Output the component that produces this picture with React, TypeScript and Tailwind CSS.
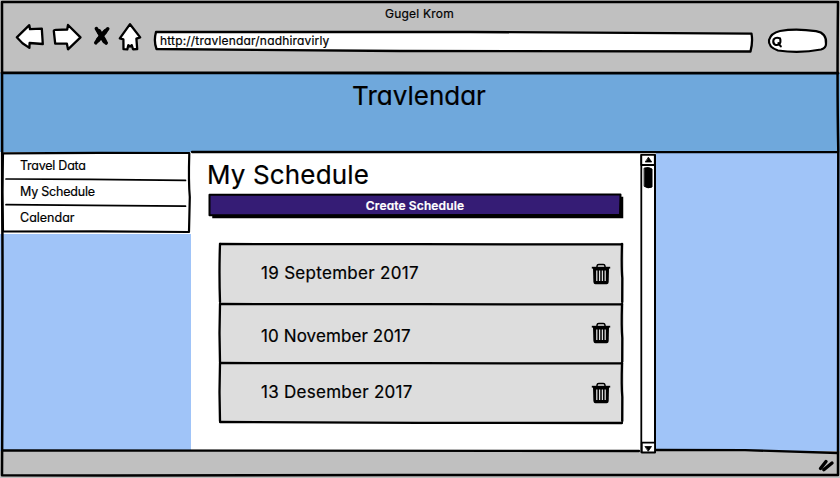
import type { ReactNode } from "react";

function Ink({ children, fill = "none" }: { children: ReactNode; fill?: string }) {
  return (
    <svg
      className="pointer-events-none absolute inset-0 h-full w-full overflow-visible"
      fill={fill}
      stroke="#000"
      strokeWidth="2.3"
      strokeLinejoin="round"
      strokeLinecap="round"
    >
      {children}
    </svg>
  );
}

function NavIcons() {
  return (
    <svg
      className="mt-5 ml-3 h-8 w-[132px] shrink-0"
      viewBox="12 20 132 32"
      fill="#fff"
      stroke="#000"
      strokeWidth="2.3"
      strokeLinejoin="round"
      strokeLinecap="round"
    >
      <path d="M16.8 37.3 L29.3 25.2 L30 29.2 L41.8 28.7 L42.8 44 L29.6 43 L29.4 47.9 L22.5 43.2 Z" />
      <path d="M53.8 30.8 Q54 29.6 57 29.9 L67.2 29.5 L68 25 L80.5 37.4 L68 49.3 L66.9 43.7 L55.2 43.6 Z" />
      <path d="M96.4 28.6 Q101 37 106.2 43 M107.7 28.8 Q101.5 34.5 95.8 42.8" strokeWidth="3.6" />
      <path d="M99 31.5 L104.5 41 M105.3 31.5 L98 40" strokeWidth="4.6" />
      <path d="M130 24.2 L140.2 37.4 L136.4 38.6 L137.2 49 L133 49.3 L131.8 45.2 L130 46.5 L128.3 45.2 L127.3 49.4 L123.5 49.2 L123.4 39.4 L119.8 38.4 Z" />
    </svg>
  );
}

function Trash({ offset }: { offset: string }) {
  return (
    <svg className={`mr-px h-[22px] w-5 shrink-0 ${offset}`} viewBox="0 0 20 22" fill="none" stroke="#000">
      <path d="M6 4.4 V3.2 Q6.2 1.6 7.7 1.6 H12.3 Q13.8 1.6 14 3.2 V4.4" strokeWidth="1.5" />
      <path d="M0.8 4.7 H19.2" strokeWidth="1.8" />
      <path d="M2 5 H18 L17.7 19 Q17.5 21.2 15.7 21.2 H4.4 Q2.6 21.2 2.4 19 Z" fill="#000" stroke="none" />
      <path d="M5.8 7.4 V18 M8.6 7.4 V18 M11.4 7.4 V18 M14.2 7.4 V18" stroke="#ddd" strokeWidth="1.25" />
    </svg>
  );
}

function Toolbar() {
  return (
    <header className="relative flex h-[73px] shrink-0 flex-col bg-[#c0c0c0]">
      <div className="absolute inset-x-0 top-1.5 pr-px text-center text-[12px] leading-4 tracking-[0.2px]">Gugel Krom</div>
      <div className="flex">
        <NavIcons />
        <div className="relative mt-[31px] ml-[11px] flex h-5 w-[597px] items-center pl-[5px] text-[12px] tracking-[0.18px]">
          <Ink fill="#fff">
            <path d="M1 1 L315 1 L596.5 2.6 Q598 11 595.5 20.5 L245 20 L1.5 18 Q-1.5 10 1 1 Z" />
          </Ink>
          <span className="relative">http://travlendar/nadhiravirly</span>
        </div>
        <div className="relative mt-[29px] ml-4 h-6 w-[58px]">
          <Ink fill="#fff">
            <path d="M12 2 Q28 -1 48 2.2 Q59 4 58 15 Q58 19 53 20.5 Q32 24.5 10 21.5 Q0 18 1 11 Q3 4 12 2 Z" strokeWidth="2.2" />
            <path d="M12 9.4 Q8 7.6 5.6 10.5 Q4.4 14 7 15.7 Q11.5 17 12.4 13 Q12.6 10.8 12 9.4 M10.4 14.2 L12.8 17.3" strokeWidth="2.1" />
          </Ink>
        </div>
      </div>
    </header>
  );
}

function Menu() {
  return (
    <nav className="relative flex h-[82px] w-[191px] flex-col bg-white pt-px pl-5 text-[12.5px] leading-[26px]">
      <span className="-tracking-[0.25px]">Travel Data</span>
      <span className="-tracking-[0.2px]">My Schedule</span>
      <span className="tracking-[0px]">Calendar</span>
      <Ink>
        <path d="M3 1.3 L100 0.8 L189.3 1 Q188.4 30 189.8 45 L189 80 L100 79.3 L3 79.5 Q1.5 40 3 1.3" strokeWidth="2.2" />
        <path d="M6 27 L90 27.4 L185.5 28.4 M6 52.7 L90 53.3 L185.5 54.2" strokeWidth="1.7" />
      </Ink>
    </nav>
  );
}

function Row({ date, text, box, icon }: { date: string; text: string; box: string; icon: string }) {
  return (
    <li className={`relative flex items-center justify-between bg-[#ddd] pr-3 pl-[42px] text-[17px] ${box}`}>
      <span className={text}>{date}</span>
      <Trash offset={icon} />
      <Ink>
        <path d="M1 1 L200 1.2 L403 1.4" />
        <path d="M1 1 Q0 30 1 59" />
        <path d="M403 1 Q402.3 24 403.3 35 L403.2 59" />
      </Ink>
    </li>
  );
}

function Scrollbar() {
  return (
    <div className="relative h-full w-4 bg-white">
      <Ink>
        <path d="M1.3 3 V300" strokeWidth="1.8" />
        <path d="M15 3 V300" strokeWidth="2" />
        <path d="M1.3 2.8 H14.8 V13 H1.3 Z M1.8 290.6 H15 V300.5 H1.8 Z" fill="#fff" strokeWidth="1.8" />
        <path d="M8.6 5.5 L11.7 10 H5.6 Z M5.3 294.5 H11.5 L8.4 299 Z" fill="#000" strokeWidth="0.8" />
        <path d="M4.5 16 Q9 14.5 12 17 V35 Q8 37 4.5 34.5 Z" fill="#000" strokeWidth="1" />
      </Ink>
    </div>
  );
}

export default function App() {
  return (
    <div className="relative flex h-[478px] w-[840px] flex-col overflow-hidden bg-[#c0c0c0] font-['Inter','Noto_Sans',sans-serif] text-black [-webkit-text-stroke:0.2px] [font-feature-settings:'cv11','calt'_0]">
      <Toolbar />
      <div className="h-[79px] shrink-0 bg-[#6fa8dc] pt-1 pr-0.5 text-center text-[26px] leading-[38px] tracking-[0px]">Travlendar</div>
      <div className="relative flex h-[299px] shrink-0 bg-[#a0c4f8]">
        <aside className="w-[191px] shrink-0">
          <Menu />
        </aside>
        <main className="flex w-[449px] shrink-0 flex-col bg-white">
          <h1 className="mt-1 ml-4 h-[38px] text-[26px] leading-[38px] tracking-[0.15px]">My Schedule</h1>
          <button className="relative ml-[18px] h-[21px] w-[412px] shrink-0 pt-0.5 text-[12px] leading-[19px] font-semibold tracking-[0.12px] text-white">
            <Ink fill="#351c75">
              <path d="M4 3.5 H413.5 V23.5 H4 Z" fill="#000" strokeWidth="1.5" strokeLinejoin="miter" />
              <path d="M0.5 0.8 L411.5 0.5 L411 21 L0.5 21.3 Z" strokeWidth="2" />
            </Ink>
            <span className="relative">Create Schedule</span>
          </button>
          <ul className="relative mt-7 ml-7 w-[405px]">
            <Row date="19 September 2017" text="mt-0.5 tracking-[0.3px]" box="h-[60px]" icon="mt-0.5" />
            <Row date="10 November 2017" text="mt-2 tracking-[0.1px]" box="h-[59px]" icon="mt-px" />
            <Row date="13 Desember 2017" text="mt-0.5 tracking-[0.27px]" box="h-[60px]" icon="mt-0.5" />
            <Ink>
              <path d="M1 179 L200 179.8 L403 180" />
            </Ink>
          </ul>
        </main>
        <Scrollbar />
      </div>
      <footer className="relative h-[27px] shrink-0">
        <Ink>
          <path d="M820.5 17.5 L826 10.5 M823.8 18.7 L832 12" strokeWidth="3.4" />
        </Ink>
      </footer>
      <Ink>
        <path d="M2 2 H838 Q837 90 838.3 150 L838 475 L400 475 L110 475.4 L2 475.2 Q3 300 2.2 200 Z" strokeWidth="2.5" />
        <path d="M2 72.8 L400 73 L838 73.2" strokeWidth="2.8" />
        <path d="M192 152 L838 152.2" />
        <path d="M2 450.5 L639 451" />
        <path d="M656 450 L745 450.2 L838 453" />
      </Ink>
    </div>
  );
}
